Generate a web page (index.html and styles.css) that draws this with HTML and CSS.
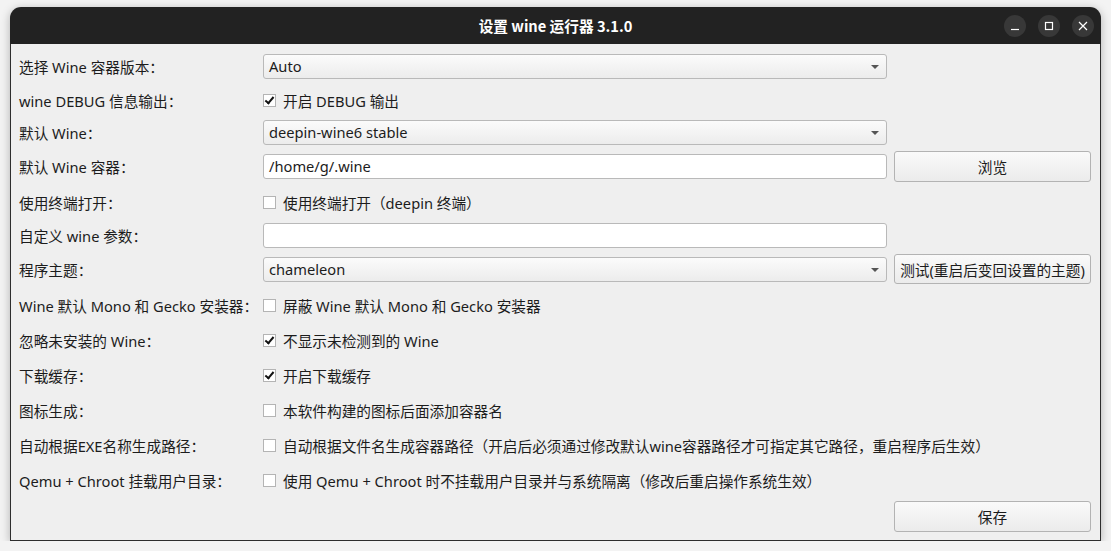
FILE: index.html
```html
<!DOCTYPE html>
<html lang="zh-CN">

<head>
    <meta charset="UTF-8">
    <title>设置 wine 运行器 3.1.0</title>
    <link rel="stylesheet" href="styles.css">
</head>

<body>
    <div class="window">
        <div class="titlebar">
            <span class="title">设置 wine 运行器 3.1.0</span>
            <div class="controls">
                <span class="ctl">
                    <svg width="10" height="10" viewBox="0 0 10 10"><path d="M1 8.5h8" stroke="#fff" stroke-width="1.2"/></svg>
                </span>
                <span class="ctl">
                    <svg width="10" height="10" viewBox="0 0 10 10"><rect x="1.5" y="1.5" width="7" height="7" fill="none" stroke="#fff" stroke-width="1.2"/></svg>
                </span>
                <span class="ctl">
                    <svg width="10" height="10" viewBox="0 0 10 10"><path d="M1 1l8 8M9 1l-8 8" stroke="#fff" stroke-width="1.2"/></svg>
                </span>
            </div>
        </div>

        <div class="form">
            <div class="label">选择 Wine 容器版本：</div>
            <div class="combo">Auto</div>

            <div class="label">wine DEBUG 信息输出：</div>
            <label class="check"><span class="box checked"></span>开启 DEBUG 输出</label>

            <div class="label">默认 Wine：</div>
            <div class="combo">deepin-wine6 stable</div>

            <div class="label">默认 Wine 容器：</div>
            <div class="input">/home/g/.wine</div>
            <button class="button">浏览</button>

            <div class="label">使用终端打开：</div>
            <label class="check"><span class="box"></span>使用终端打开（deepin 终端）</label>

            <div class="label">自定义 wine 参数：</div>
            <div class="input"></div>

            <div class="label">程序主题：</div>
            <div class="combo">chameleon</div>
            <button class="button tight">测试(重启后变回设置的主题)</button>

            <div class="label">Wine 默认 Mono 和 Gecko 安装器：</div>
            <label class="check"><span class="box"></span>屏蔽 Wine 默认 Mono 和 Gecko 安装器</label>

            <div class="label">忽略未安装的 Wine：</div>
            <label class="check"><span class="box checked"></span>不显示未检测到的 Wine</label>

            <div class="label">下载缓存：</div>
            <label class="check"><span class="box checked"></span>开启下载缓存</label>

            <div class="label">图标生成：</div>
            <label class="check"><span class="box"></span>本软件构建的图标后面添加容器名</label>

            <div class="label">自动根据EXE名称生成路径：</div>
            <label class="check"><span class="box"></span>自动根据文件名生成容器路径（开启后必须通过修改默认wine容器路径才可指定其它路径，重启程序后生效）</label>

            <div class="label">Qemu + Chroot 挂载用户目录：</div>
            <label class="check"><span class="box"></span>使用 Qemu + Chroot 时不挂载用户目录并与系统隔离（修改后重启操作系统生效）</label>

            <button class="button save">保存</button>
        </div>
    </div>
</body>

</html>
```

FILE: styles.css
```css
body {
    margin: 0;
    background: #f3f3f3;
    font-family: "Noto Sans", "Noto Sans CJK SC", sans-serif;
    font-size: 14.67px;
    color: #1c1c1c;
}

.window {
    width: 1091px;
    margin: 7px 0 0 10px;
    border-radius: 11px 11px 0 0;
    box-shadow: 0 2px 10px rgba(0, 0, 0, 0.28);
    background: #efefef;
}

.titlebar {
    height: 37px;
    background: #222222;
    border-radius: 11px 11px 0 0;
    display: flex;
    align-items: center;
    justify-content: center;
    position: relative;
}

.title {
    color: #ffffff;
    font-weight: bold;
    font-family: "Noto Sans CJK SC", sans-serif;
}

.controls {
    position: absolute;
    right: 7px;
    top: 8px;
    display: flex;
    gap: 12px;
}

.ctl {
    width: 22px;
    height: 22px;
    border-radius: 50%;
    background: #383838;
    display: flex;
    align-items: center;
    justify-content: center;
}

.form {
    border: 1px solid #2e2e2e;
    border-top: none;
    padding: 5px 9px 5px 8px;
    display: grid;
    grid-template-columns: 237px 624px 197px;
    grid-template-rows: 34px 34px 30px 38px 34px 32px 36px 36px 34px 36px 34px 36px 34px 38px;
    column-gap: 7px;
    align-items: center;
}

.label {
    grid-column: 1;
    white-space: nowrap;
}

.combo,
.input {
    grid-column: 2;
    box-sizing: border-box;
    height: 25px;
    line-height: 23px;
    padding: 0 5px;
    border: 1px solid #b9b9b9;
    border-radius: 3px;
    position: relative;
}

.combo {
    background: linear-gradient(#fbfbfb, #ececec);
}

.combo::after {
    content: "";
    position: absolute;
    right: 7px;
    top: 10px;
    border-left: 4px solid transparent;
    border-right: 4px solid transparent;
    border-top: 4px solid #555;
}

.input {
    background: #ffffff;
}

.check {
    grid-column: 2 / 4;
    display: flex;
    align-items: center;
    white-space: nowrap;
}

.check .box + * {
    letter-spacing: 0;
}

.box {
    width: 11px;
    height: 11px;
    border: 1px solid #b4b4b4;
    background: #ffffff;
    margin-right: 7px;
    position: relative;
}

.box.checked::after {
    content: "";
    position: absolute;
    left: 3px;
    top: 0px;
    width: 3px;
    height: 7px;
    border: solid #111;
    border-width: 0 2px 2px 0;
    transform: rotate(40deg);
}

.button {
    grid-column: 3;
    height: 31px;
    border: 1px solid #b3b3b3;
    border-radius: 3px;
    background: linear-gradient(#fafafa, #ebebeb);
    font: inherit;
    color: inherit;
    padding: 0;
}

.button.tight {
    height: 30px;
}

.save {
    grid-column: 3;
}
```
